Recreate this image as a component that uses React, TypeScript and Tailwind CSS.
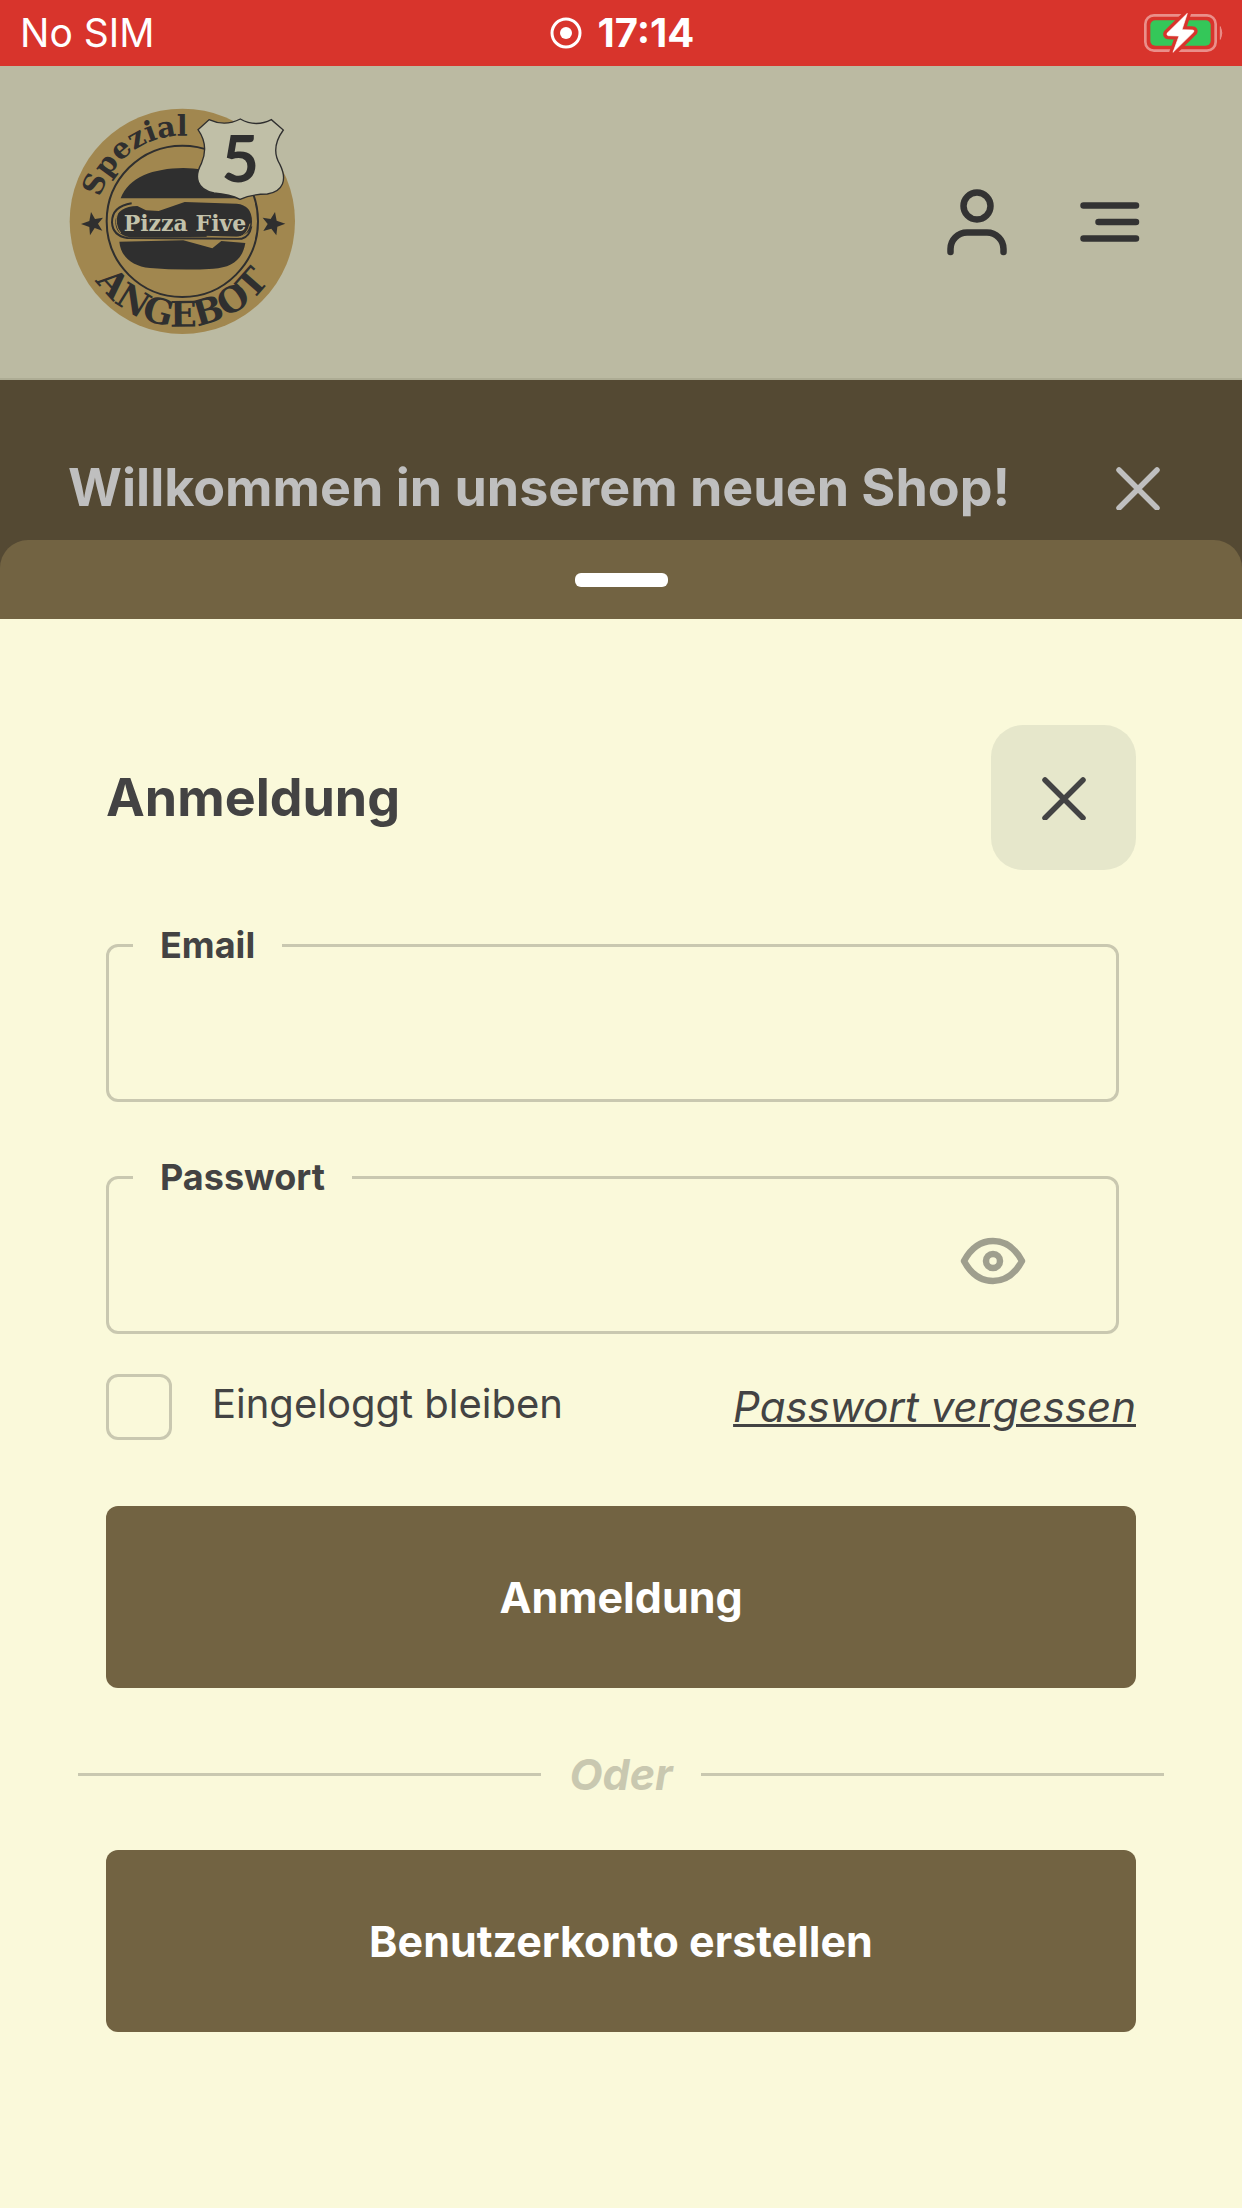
import { useState } from "react";
import type { ReactNode } from "react";

function RecordIcon() {
  return (
    <svg viewBox="0 0 32 32" className="size-8" aria-hidden="true">
      <circle cx="16" cy="16" r="14" fill="none" stroke="white" strokeWidth="3" />
      <circle cx="16" cy="16" r="6" fill="white" />
    </svg>
  );
}

function BatteryIcon() {
  const bolt = "M863 38 L802 98 Q800 104 806 105 L838 106 L820 155 L882 94 Q885 88 878 88 L847 87 Z";
  return (
    <svg viewBox="733 37 240 120" className="h-10 w-20" aria-label="Akku lädt">
      <rect x="737" y="44" width="211" height="106" rx="26" fill="none" stroke="#ea8f8a" strokeWidth="8" />
      <path d="M962 78 q9 19 0 38 z" fill="#ea8f8a" stroke="#ea8f8a" strokeWidth="3" />
      <rect x="752" y="59" width="181" height="76" rx="15" fill="#34c759" />
      <path d={bolt} fill="#d8342c" stroke="#d8342c" strokeWidth="22" strokeLinejoin="round" />
      <path d={bolt} fill="white" stroke="white" strokeWidth="2" strokeLinejoin="round" />
    </svg>
  );
}

function Logo() {
  return (
    <svg viewBox="57 55 684 684" className="size-[228px]" role="img" aria-label="Pizza Five">
      <defs>
        <path id="arc-top" d="M140 395 A257 257 0 0 1 654 395" />
        <path id="arc-bottom" d="M81 395 A316 316 0 0 0 713 395" />
      </defs>
      <circle cx="397" cy="395" r="338" fill="#a1874f" />
      <circle cx="397" cy="395" r="227" fill="none" stroke="#2f2f2f" strokeWidth="6" />
      <g fill="#2f2f2f">
        <path d="M212 326 C235 262 310 236 400 235 C480 236 545 256 574 326 Z" />
        <path d="M208 456 L400 452 L487 476 L514 454 L586 460 C578 510 545 534 490 537 Q398 543 300 535 C245 530 212 500 208 456 Z" />
        <path d="M196 392 Q204 350 262 349 L288 362 L326 364 L404 337 L560 342 Q606 346 606 396 Q606 436 560 441 L240 443 Q194 436 196 392 Z" />
      </g>
      <path
        d="M245 341 Q186 350 186 398 Q188 438 232 445 L575 447 Q598 442 604 410"
        fill="none"
        stroke="#2f2f2f"
        strokeWidth="6"
      />
      <path d="M202 372 Q192 404 212 430 M470 440 L565 443 Q592 437 600 402" fill="none" stroke="#a1874f" strokeWidth="3" />
      <g fill="#2f2f2f">
        <path d="M123 367 L135 388 L159 384 L144 402 L157 423 L134 415 L120 437 L118 412 L93 403 L118 394 Z" />
        <path d="M675 367 L680 393 L706 402 L682 411 L679 437 L664 417 L640 424 L653 403 L638 384 L662 388 Z" />
      </g>
      <g fill="#2f2f2f" fontFamily="'DejaVu Serif', serif" fontWeight="700">
        <text fontSize="86">
          <textPath href="#arc-top" startOffset="246" textAnchor="middle">
            Spezial
          </textPath>
        </text>
        <text fontSize="106">
          <textPath href="#arc-bottom" startOffset="50%" textAnchor="middle">
            ANGEBOT
          </textPath>
        </text>
      </g>
      <text x="405" y="425" textAnchor="middle" fontFamily="'DejaVu Serif', serif" fontWeight="700" fontSize="66" fill="#c3c2aa">
        Pizza Five
      </text>
      <path
        d="M444 120 L477 90 Q525 112 571 88 Q617 114 664 90 L700 121 Q660 176 690 225 C712 270 700 305 652 313 Q602 314 570 329 Q540 314 492 310 C440 300 432 262 454 222 Q478 168 444 120 Z"
        fill="#c0bfa7"
        stroke="#2f2f2f"
        strokeWidth="4"
      />
      <text x="571" y="278" textAnchor="middle" fontFamily="Lato, sans-serif" fontWeight="700" fontSize="194" fill="#2f2f2f">
        5
      </text>
    </svg>
  );
}

function UserIcon() {
  return (
    <svg viewBox="0 0 60 67" className="h-[67px] w-15" fill="none" stroke="currentColor" strokeWidth="6.500" strokeLinecap="round" aria-hidden="true">
      <circle cx="30" cy="17" r="13.500" />
      <path d="M3.5 63 v-3 a16.500 16.500 0 0 1 16.500 -16.500 h20 a16.500 16.500 0 0 1 16.500 16.500 v3" />
    </svg>
  );
}

function MenuIcon() {
  return (
    <svg viewBox="0 0 60 40" className="h-10 w-15" fill="none" stroke="currentColor" strokeWidth="6.500" strokeLinecap="round" aria-hidden="true">
      <path d="M3.5 3.5 H56 M18.500 20 H56 M3.5 36.500 H56" />
    </svg>
  );
}

function CrossIcon() {
  return (
    <svg viewBox="0 0 44 44" className="size-11" fill="none" stroke="currentColor" strokeWidth="5.500" strokeLinecap="round" aria-hidden="true">
      <path d="M3 4 L41 42 M41 4 L3 42" />
    </svg>
  );
}

function EyeIcon() {
  return (
    <svg viewBox="0 0 66 48" className="h-12 w-[66px]" fill="none" stroke="currentColor" strokeWidth="6.500" strokeLinejoin="round" aria-hidden="true">
      <path d="M4 24 C11 11 21 4 33 4 S55 11 62 24 C55 37 45 44 33 44 S11 37 4 24 Z" />
      <circle cx="33" cy="24" r="7" />
    </svg>
  );
}

type FieldProps = {
  id: string;
  label: string;
  type: string;
  children?: ReactNode;
};

function Field({ id, label, type, children }: FieldProps) {
  return (
    <fieldset className="mr-[17px] rounded-xl border-3 border-[#c9c8b0] pl-6">
      <legend className="px-[27px] text-4xl leading-[48px] font-bold">
        <label htmlFor={id}>{label}</label>
      </legend>
      <div className="flex h-[130px] items-start">
        <input id={id} type={type} className="h-full min-w-0 flex-1 bg-transparent px-7 text-4xl outline-none" />
        {children}
      </div>
    </fieldset>
  );
}

const primaryButton =
  "h-[182px] w-full rounded-xl bg-[#726342] text-[43px] leading-[52px] font-bold text-white";

export default function App() {
  const [visible, setVisible] = useState(false);

  return (
    <div className="flex min-h-screen flex-col bg-[#544933] font-[Inter,sans-serif] text-[#434343]">
      <div className="grid h-[66px] grid-cols-3 items-center bg-[#d8342c] pr-[18px] pl-5 text-white">
        <span className="text-[39px] leading-[48px]">No SIM</span>
        <span className="flex items-center justify-center gap-4 text-[40px] leading-[48px] font-bold">
          <RecordIcon />
          17:14
        </span>
        <span className="flex justify-end">
          <BatteryIcon />
        </span>
      </div>

      <header className="flex h-[314px] items-center justify-between border-b-2 border-[#adac94] bg-[#bbbaa2] pr-[102px] pl-[69px] text-[#333333]">
        <a href="#start" aria-label="Pizza Five Startseite">
          <Logo />
        </a>
        <nav className="flex items-center gap-[73px]">
          <button type="button" aria-label="Benutzerkonto">
            <UserIcon />
          </button>
          <button type="button" aria-label="Menü">
            <MenuIcon />
          </button>
        </nav>
      </header>

      <div className="flex items-center justify-between py-19 pr-[82px] pl-[68px] text-[#bfbfbf]">
        <p className="text-[52px] leading-[64px] font-bold">Willkommen in unserem neuen Shop!</p>
        <button type="button" aria-label="Hinweis schließen">
          <CrossIcon />
        </button>
      </div>

      <section role="dialog" aria-labelledby="login-title" className="relative -mt-14 flex flex-1 flex-col">
        <div className="flex h-[79px] items-center justify-center rounded-t-[28px] bg-[#726342]">
          <div className="h-[14px] w-[93px] rounded-md bg-white" />
        </div>

        <form className="flex flex-1 flex-col bg-[#faf9da] px-[106px] pt-[106px]" onSubmit={(e) => e.preventDefault()}>
          <div className="mb-[51px] flex items-center justify-between">
            <h1 id="login-title" className="text-[52px] leading-[64px] font-bold">
              Anmeldung
            </h1>
            <button
              type="button"
              aria-label="Schließen"
              className="flex size-[145px] items-center justify-center rounded-[32px] bg-[#e6e7cb]"
            >
              <CrossIcon />
            </button>
          </div>

          <div className="flex flex-col gap-[51px]">
            <Field id="email" label="Email" type="email" />
            <Field id="password" label="Passwort" type={visible ? "text" : "password"}>
              <button
                type="button"
                aria-label="Passwort anzeigen"
                onClick={() => setVisible(!visible)}
                className="mr-[90px] flex h-30 items-center text-[#9f9f8e]"
              >
                <EyeIcon />
              </button>
            </Field>
          </div>

          <div className="mt-10 flex items-center justify-between">
            <label className="flex items-start gap-10 text-[40px] leading-[60px]">
              <input
                type="checkbox"
                className="size-[66px] appearance-none rounded-xl border-3 border-[#c9c8b0] checked:bg-[#726342]"
              />
              Eingeloggt bleiben
            </label>
            <a href="#passwort" className="text-[42px] leading-[52px] italic underline decoration-3">
              Passwort vergessen
            </a>
          </div>

          <button type="submit" className={`mt-[66px] ${primaryButton}`}>
            Anmeldung
          </button>

          <div className="-mx-7 mt-15 mb-[50px] flex items-center gap-7 text-[#c9c8b0]">
            <div className="h-[3px] flex-1 bg-[#c9c8b0]" />
            <span className="text-[43px] leading-[52px] font-bold italic">Oder</span>
            <div className="h-[3px] flex-1 bg-[#c9c8b0]" />
          </div>

          <button type="button" className={primaryButton}>
            Benutzerkonto erstellen
          </button>
        </form>
      </section>
    </div>
  );
}
